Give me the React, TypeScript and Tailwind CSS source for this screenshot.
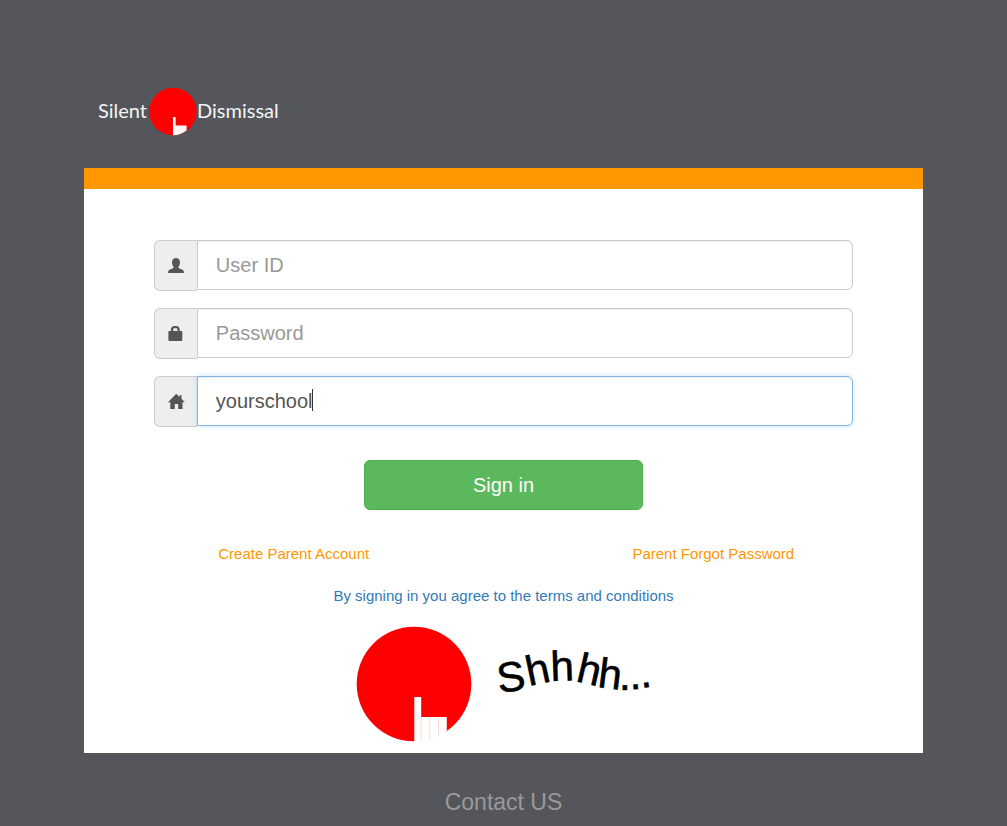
import React, { useState } from "react";

function UserIcon() {
  return (
    <svg viewBox="0 0 18 18" className="size-[18px]" fill="currentColor" aria-hidden="true">
      <path d="M9 1c2.500 0 4 1.700 4 4.200 0 1.800-.6 3.300-1.500 4.300-.3 1.100.1 1.700 1.100 2.100l2.900 1.200c.8.400 1.200.9 1.300 1.700V16H1.200v-1.500c.1-.8.500-1.300 1.300-1.700l2.900-1.200c1-.4 1.400-1 1.100-2.100C5.600 8.500 5 7 5 5.200 5 2.700 6.500 1 9 1z" />
    </svg>
  );
}

function LockIcon() {
  return (
    <svg viewBox="0 0 18 18" className="size-[18px]" fill="currentColor" aria-hidden="true">
      <path fillRule="evenodd" d="M3.900 6V4.500C3.900 2.300 5.300 1 7.300 1h2c2 0 3.400 1.300 3.400 3.500V6h1.800c.5 0 .8.300.8.800v8.400c0 .5-.3.800-.8.800h-12.300c-.5 0-.8-.3-.8-.8V6.800c0-.5.3-.8.8-.8h1.700zm2.300 0h4.200V4.500c0-.8-.5-1.300-1.300-1.300H7.500c-.8 0-1.300.5-1.300 1.300V6z" />
    </svg>
  );
}

function HomeIcon() {
  return (
    <svg viewBox="0 0 18 18" className="size-[18px]" fill="currentColor" aria-hidden="true">
      <path d="M9.300 .8l3.200 3.100V2.200h2v3.600L17.900 9.200h-2.400V16h-4.300v-5H7.800v5H3.300V9.200H.9z" />
    </svg>
  );
}

function Logo() {
  return (
    <svg viewBox="0 0 180 50" className="block h-[50px] w-[180px]" role="img" aria-label="Silent Dismissal">
      <g fill="#f4f4f4" fontFamily="Lato, sans-serif" fontSize="20">
        <text x="48" y="32" textAnchor="end">Silent</text>
        <text x="98" y="32">Dismissal</text>
      </g>
      <circle cx="74" cy="25.500" r="23.800" fill="#f00" />
      <path d="M74 31h2.600v8.500h11v4.700c-3.800 3.500-8.500 5-13.600 5z" fill="#fff" />
      <path d="M79.500 40v7M83.500 40v5.500" stroke="#ffdcdc" strokeWidth=".5" />
    </svg>
  );
}

function Hush() {
  return (
    <svg viewBox="0 0 300 116" className="block h-[116px] w-[300px]" role="img" aria-label="Shhhh...">
      <circle cx="60" cy="58" r="57.300" fill="#f00" />
      <path d="M60.300 71h6.900v20h25.600v14c-8 8-19 12-32.500 11.500z" fill="#fff" />
      <path d="M67.200 91.500V115M75.800 91.500V113M84.500 91.500V109" stroke="#ffd9dc" strokeWidth="1" />
      <g
        transform="translate(131 14)"
        fill="#000"
        stroke="#000"
        strokeWidth=".6"
        fontFamily="Liberation Sans, Arial, sans-serif"
        fontSize="42"
      >
        <text transform="translate(14 53) rotate(-8)">S</text>
        <text transform="translate(44 46) rotate(-12)">h</text>
        <text transform="translate(66 41) rotate(-2)">h</text>
        <text transform="translate(90 41) rotate(13)">h</text>
        <text transform="translate(112 47) rotate(7)">h</text>
        <text transform="translate(134 50)">.</text>
        <text transform="translate(145 49.500) rotate(-4)">.</text>
        <text transform="translate(156 48) rotate(-8)">.</text>
      </g>
    </svg>
  );
}

type FieldProps = {
  id: string;
  label: string;
  type?: string;
  icon: React.ReactNode;
  initial?: string;
  focused?: boolean;
};

function Field({ id, label, type = "text", icon, initial = "", focused = false }: FieldProps) {
  const [value, setValue] = useState(initial);
  return (
    <div className="relative flex items-start">
      <label
        htmlFor={id}
        aria-label={label}
        className="flex h-[51px] w-[43px] shrink-0 items-center justify-center rounded-l-md border border-r-0 border-[#ccc] bg-[#eee] text-[#555]"
      >
        {icon}
      </label>
      <input
        id={id}
        type={type}
        placeholder={label}
        value={value}
        autoFocus={focused}
        onFocus={(e) => e.currentTarget.setSelectionRange(e.currentTarget.value.length, e.currentTarget.value.length)}
        onChange={(e) => setValue(e.target.value)}
        className="peer h-[50px] min-w-0 flex-1 rounded-r-md border border-[#ccc] bg-white px-[18px] text-[20px] text-[#555] shadow-[inset_0_1px_1px_rgba(0,0,0,0.075)] outline-none placeholder:text-[#999] focus:border-[#7fb5e0] focus:shadow-[inset_0_1px_1px_rgba(0,0,0,0.075),0_0_5px_rgba(102,175,233,0.4)]"
      />
      {focused && value === initial && (
        <span className="absolute top-[13px] left-[158px] hidden h-[22px] w-px bg-[#333] peer-focus:block" />
      )}
    </div>
  );
}

export default function App() {
  return (
    <div className="min-h-screen bg-[#55565b] font-['Liberation_Sans',Arial,sans-serif] text-[15px] leading-[21px]">
      <div className="mx-auto w-5/6">
        <header className="px-[15px] pt-[86px] pb-8">
          <Logo />
        </header>
        <main className="border-t-[21px] border-[#ff9800] bg-white pt-[51px] pb-[11px]">
          <form className="mx-auto flex w-5/6 flex-col gap-[17px]" onSubmit={(e) => e.preventDefault()}>
            <Field id="user" label="User ID" icon={<UserIcon />} />
            <Field id="password" label="Password" type="password" icon={<LockIcon />} />
            <Field id="school" label="School" icon={<HomeIcon />} initial="yourschool" focused />
            <button
              type="submit"
              className="mx-auto mt-4 h-[50px] w-2/5 rounded-md border border-[#4cae4c] bg-[#5cb85c] text-[20px] text-white"
            >
              Sign in
            </button>
          </form>
          <nav className="mt-[33px] grid grid-cols-2 text-center text-[#ff9800]">
            <a href="#create">Create Parent Account</a>
            <a href="#forgot">Parent Forgot Password</a>
          </nav>
          <p className="mt-[21px] text-center text-[#337ab7]">
            <a href="#terms">By signing in you agree to the terms and conditions</a>
          </p>
          <div className="mt-5 flex justify-center">
            <Hush />
          </div>
        </main>
        <footer className="pt-9 text-center text-[23px] leading-[26px] text-[#999]">
          <a href="#contact">Contact US</a>
        </footer>
      </div>
    </div>
  );
}
